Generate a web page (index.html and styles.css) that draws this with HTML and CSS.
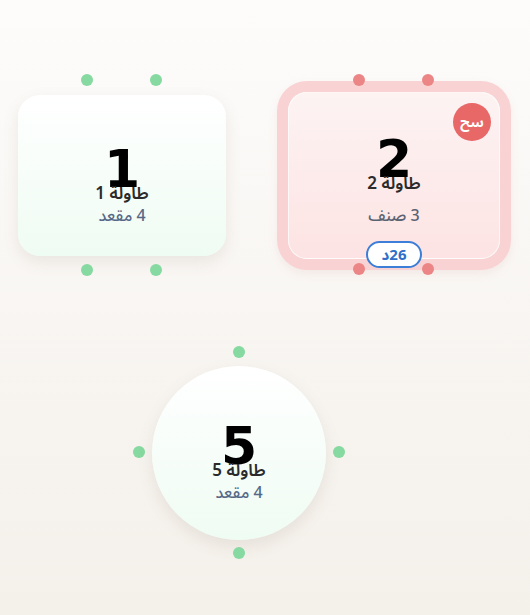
FILE: index.html
```html
<!DOCTYPE html>
<html lang="ar" dir="rtl">
<head>
<meta charset="utf-8">
<link rel="stylesheet" href="styles.css">
</head>
<body>
<div class="floor">
  <div class="table t1">
    <span class="dot d-top d-a green"></span>
    <span class="dot d-top d-b green"></span>
    <div class="card rect free">
      <div class="num">1</div>
      <div class="label">طاولة 1</div>
      <div class="sub">4 مقعد</div>
    </div>
    <span class="dot d-bot d-a green"></span>
    <span class="dot d-bot d-b green"></span>
  </div>

  <div class="table t2">
    <span class="dot d-top d-a red"></span>
    <span class="dot d-top d-b red"></span>
    <div class="card rect busy">
      <span class="badge">سح</span>
      <div class="num">2</div>
      <div class="label">طاولة 2</div>
      <div class="sub busy-sub">3 صنف</div>
      <span class="timer">26د</span>
    </div>
    <span class="dot d-bot d-a red"></span>
    <span class="dot d-bot d-b red"></span>
  </div>

  <div class="table t5">
    <span class="dot c-top green"></span>
    <span class="dot c-left green"></span>
    <div class="card round free">
      <div class="num">5</div>
      <div class="label">طاولة 5</div>
      <div class="sub">4 مقعد</div>
    </div>
    <span class="dot c-right green"></span>
    <span class="dot c-bot green"></span>
  </div>
</div>
</body>
</html>
```
FILE: styles.css
```css
html, body {
  margin: 0;
  padding: 0;
}
body {
  width: 530px;
  height: 615px;
  overflow: hidden;
  background: linear-gradient(180deg, #fdfcfb 0%, #f4f0ea 100%);
  font-family: "Noto Sans Arabic", "Noto Sans", "DejaVu Sans", sans-serif;
}
.floor {
  position: relative;
  width: 530px;
  height: 615px;
}
.table {
  position: absolute;
}
.t1 { left: 18px; top: 95px; width: 208px; height: 161px; }
.t2 { left: 288px; top: 92px; width: 212px; height: 167px; }
.t5 { left: 152px; top: 366px; width: 174px; height: 174px; }

.card {
  box-sizing: border-box;
  width: 100%;
  height: 100%;
  display: flex;
  flex-direction: column;
  align-items: center;
  justify-content: center;
  position: relative;
  padding-top: 26px;
}
.rect { border-radius: 22px; }
.round { border-radius: 50%; }
.free {
  background: linear-gradient(180deg, #ffffff 0%, #effcf3 100%);
  box-shadow: 0 6px 16px rgba(120, 100, 80, 0.12);
}
.busy {
  border-radius: 19px;
  border: 1px solid rgba(255, 255, 255, 0.7);
  background: linear-gradient(180deg, #fdf3f3 0%, #fde3e3 100%);
  box-shadow: 0 0 0 11px #f9d3d3, 0 4px 10px 11px rgba(200, 120, 120, 0.10);
  padding-top: 16px;
}
.num {
  font-family: "DejaVu Sans", sans-serif;
  font-weight: 700;
  font-size: 52px;
  line-height: 36px;
  color: #000;
  height: 36px;
  direction: ltr;
}
.label {
  font-size: 17px;
  font-weight: 600;
  color: #2b2b2b;
  line-height: 22px;
  margin-top: -4px;
}
.sub {
  font-size: 16px;
  font-weight: 500;
  color: #566987;
  line-height: 22px;
  margin-top: 0;
}
.busy-sub {
  margin-top: 10px;
  color: #5a6372;
}
.badge {
  position: absolute;
  top: 10px;
  left: 164px;
  width: 38px;
  height: 38px;
  border-radius: 50%;
  background: #e86767;
  color: #fff;
  font-weight: 700;
  font-size: 14px;
  display: flex;
  align-items: center;
  justify-content: center;
}
.timer {
  position: absolute;
  left: 77px;
  top: 148px;
  box-sizing: border-box;
  width: 56px;
  height: 27px;
  border: 2px solid #3d7ed8;
  border-radius: 14px;
  background: #fff;
  color: #2f6fc7;
  font-weight: 700;
  font-size: 15px;
  display: flex;
  align-items: center;
  justify-content: center;
  z-index: 3;
}
.dot {
  position: absolute;
  width: 12px;
  height: 12px;
  border-radius: 50%;
  z-index: 0;
}
.green { background: #86d9a0; }
.red { background: #ec8585; }
.t1 .d-top { top: -21px; }
.t1 .d-bot { bottom: -20px; }
.t1 .d-a { left: 63px; }
.t1 .d-b { left: 132px; }
.t2 .d-top { top: -18px; }
.t2 .d-bot { bottom: -16px; }
.t2 .d-a { left: 65px; }
.t2 .d-b { left: 134px; }
.t2 .dot { z-index: 2; }
.c-top { left: 81px; top: -20px; }
.c-bot { left: 81px; bottom: -19px; }
.c-left { top: 80px; left: -19px; }
.c-right { top: 80px; right: -19px; }
```
